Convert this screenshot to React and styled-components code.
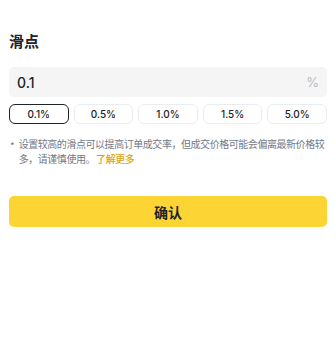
import React, { useState } from "react";
import styled, { createGlobalStyle } from "styled-components";

const Global = createGlobalStyle`
  html, body { margin: 0; padding: 0; background: #fff; }
  body { font-family: Inter, "Noto Sans CJK SC", sans-serif; color: #1E2329; }
`;

const Page = styled.div`
  width: 336px;
  box-sizing: border-box;
  padding: 30px 9px 0;
  display: flex;
  flex-direction: column;
`;

const Title = styled.h2`
  margin: 0;
  font-size: 15px;
  line-height: 21px;
  font-weight: 700;
  font-family: "Noto Sans CJK SC", sans-serif;
  color: #1E2329;
`;

const InputBox = styled.div`
  margin-top: 16px;
  height: 30px;
  border-radius: 5px;
  background: #F5F5F5;
  display: flex;
  align-items: center;
  justify-content: space-between;
  padding: 0 8px 0 8px;
`;

const Value = styled.span`
  font-size: 14px;
  font-weight: 500;
  color: #1E2329;
`;

const Unit = styled.span`
  font-size: 13px;
  color: #B7BDC6;
`;

const Chips = styled.div`
  margin-top: 7px;
  display: grid;
  grid-template-columns: repeat(5, 1fr);
  gap: 5px;
`;

const Chip = styled.button`
  height: 20px;
  box-sizing: border-box;
  border-radius: 6px;
  background: #fff;
  border: ${(p) => (p.$active ? "1.5px solid #1E2329" : "1px solid #EAECEF")};
  font-family: Inter, sans-serif;
  font-size: 10px;
  font-weight: 500;
  color: #1E2329;
  padding: 0;
  display: flex;
  align-items: center;
  justify-content: center;
`;

const Note = styled.div`
  margin: 12px 0 0;
  display: flex;
  gap: 4px;
  font-size: 10px;
  line-height: 15px;
  color: #707A8A;
  font-family: "Noto Sans CJK SC", sans-serif;
`;

const Star = styled.span`
  flex: none;
  padding-left: 1px;
  padding-top: 2px;
  line-height: 15px;
`;

const NoteText = styled.p`
  flex: 1;
  min-width: 0;
  margin: 0;
  letter-spacing: -0.45px;
`;

const Link = styled.span`
  color: #D9A40F;
  font-weight: 500;
  padding-left: 1px;
`;

const Confirm = styled.button`
  margin-top: 30px;
  height: 31px;
  border: none;
  border-radius: 5px;
  background: #FCD535;
  font-family: "Noto Sans CJK SC", sans-serif;
  font-size: 14px;
  font-weight: 700;
  color: #1E2329;
`;

const options = ["0.1%", "0.5%", "1.0%", "1.5%", "5.0%"];

export default function App() {
  const [sel, setSel] = useState(0);
  return (
    <>
      <Global />
      <Page>
        <Title>滑点</Title>
        <InputBox>
          <Value>0.1</Value>
          <Unit>%</Unit>
        </InputBox>
        <Chips>
          {options.map((o, i) => (
            <Chip key={o} $active={i === sel} onClick={() => setSel(i)}>
              {o}
            </Chip>
          ))}
        </Chips>
        <Note>
          <Star>*</Star>
          <NoteText>
            设置较高的滑点可以提高订单成交率，但成交价格可能会偏离最新价格较多，请谨慎使用。<Link>了解更多</Link>
          </NoteText>
        </Note>
        <Confirm>确认</Confirm>
      </Page>
    </>
  );
}
